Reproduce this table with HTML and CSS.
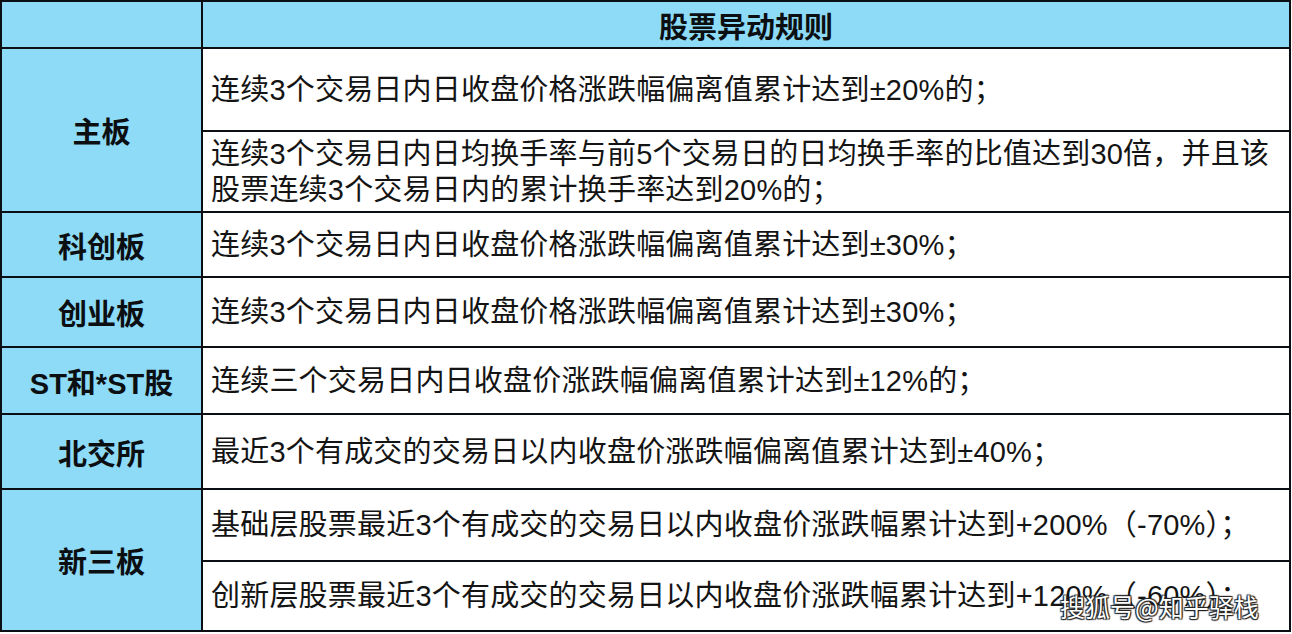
FILE: index.html
```html
<!DOCTYPE html>
<html lang="zh-CN">
<head>
<meta charset="utf-8">
<title>股票异动规则</title>
<link rel="stylesheet" href="styles.css">
</head>
<body>
<div class="sheet">
  <div class="grid">
    <div class="cell label corner"></div>
    <div class="cell label head">股票异动规则</div>

    <div class="cell label span2">主板</div>
    <div class="cell text">连续3个交易日内日收盘价格涨跌幅偏离值累计达到±20%的；</div>
    <div class="cell text">连续3个交易日内日均换手率与前5个交易日的日均换手率的比值达到30倍，并且该<br>股票连续3个交易日内的累计换手率达到20%的；</div>

    <div class="cell label">科创板</div>
    <div class="cell text">连续3个交易日内日收盘价格涨跌幅偏离值累计达到±30%；</div>

    <div class="cell label">创业板</div>
    <div class="cell text">连续3个交易日内日收盘价格涨跌幅偏离值累计达到±30%；</div>

    <div class="cell label">ST和*ST股</div>
    <div class="cell text">连续三个交易日内日收盘价涨跌幅偏离值累计达到±12%的；</div>

    <div class="cell label">北交所</div>
    <div class="cell text">最近3个有成交的交易日以内收盘价涨跌幅偏离值累计达到±40%；</div>

    <div class="cell label span2">新三板</div>
    <div class="cell text">基础层股票最近3个有成交的交易日以内收盘价涨跌幅累计达到+200%（-70%）；</div>
    <div class="cell text">创新层股票最近3个有成交的交易日以内收盘价涨跌幅累计达到+120%（-60%）；</div>
  </div>
  <div class="watermark">搜狐号@知乎驿栈</div>
</div>
</body>
</html>
```
FILE: styles.css
```css
html, body {
  margin: 0;
  padding: 0;
  background: #fff;
}
body {
  font-family: "Liberation Sans", "Noto Sans CJK SC", sans-serif;
  color: #111;
}
.sheet {
  position: relative;
  width: 1291px;
  height: 634px;
}
.grid {
  display: grid;
  grid-template-columns: 199px 1fr;
  grid-template-rows: 45px 81px 79px 63px 68px 65px 73px 70px 68px;
  gap: 2px;
  padding: 2px;
  background: #0b0f14;
  width: 1287px;
}
.cell {
  display: flex;
  align-items: center;
  background: #fff;
}
.label {
  background: #8ddbf6;
  justify-content: center;
  font-weight: bold;
  font-size: 29px;
  color: #0c0f12;
}
.span2 {
  grid-row: span 2;
}
.text {
  padding-left: 8px;
  font-size: 29px;
  letter-spacing: 0.2px;
  line-height: 36px;
  color: #141414;
  white-space: nowrap;
}
.watermark {
  position: absolute;
  left: 1060px;
  top: 588px;
  font-size: 25px;
  color: #fff;
  font-family: "Noto Sans CJK SC", sans-serif;
  text-shadow: 1px 1px 1px #222, -1px -1px 1px #222, 1px -1px 1px #222, -1px 1px 1px #222;
}
```
